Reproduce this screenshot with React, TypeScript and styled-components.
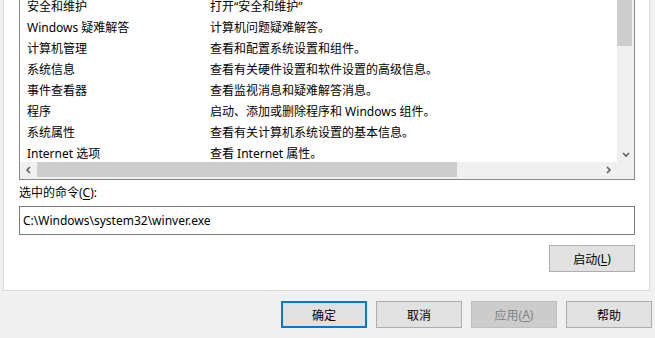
import React from "react";
import styled, { createGlobalStyle } from "styled-components";

const GlobalStyle = createGlobalStyle`
  html, body {
    margin: 0;
    padding: 0;
    background: #f0f0f0;
  }
  body {
    font-family: "Noto Sans", "Noto Sans CJK SC", sans-serif;
    font-size: 12px;
    color: #000;
  }
`;

type Tool = { name: string; desc: string };

const tools: Tool[] = [
  { name: "安全和维护", desc: "打开“安全和维护”" },
  { name: "Windows 疑难解答", desc: "计算机问题疑难解答。" },
  { name: "计算机管理", desc: "查看和配置系统设置和组件。" },
  { name: "系统信息", desc: "查看有关硬件设置和软件设置的高级信息。" },
  { name: "事件查看器", desc: "查看监视消息和疑难解答消息。" },
  { name: "程序", desc: "启动、添加或删除程序和 Windows 组件。" },
  { name: "系统属性", desc: "查看有关计算机系统设置的基本信息。" },
  { name: "Internet 选项", desc: "查看 Internet 属性。" },
];

const Window = styled.div`
  width: 655px;
  height: 338px;
  background: #f0f0f0;
  overflow: hidden;
  display: flex;
  flex-direction: column;
  font-family: "Noto Sans", "Noto Sans CJK SC", sans-serif;
  font-size: 12px;
`;

const TabPage = styled.div`
  margin-left: 3px;
  width: 647px;
  box-sizing: border-box;
  background: #fff;
  border: 1px solid #d9d9d9;
  border-top: none;
  padding: 0 14px 18px 15px;
  display: flex;
  flex-direction: column;
`;

const ListBox = styled.div`
  height: 180px;
  box-sizing: border-box;
  border: 1px solid #828790;
  border-top: none;
  display: grid;
  grid-template-columns: minmax(0, 1fr) 17px;
  grid-template-rows: minmax(0, 1fr) 17px;
  overflow: hidden;
`;

const Rows = styled.div`
  overflow: hidden;
  background: #fff;
`;

const RowsInner = styled.div`
  margin-top: -4px;
`;

const Row = styled.div`
  height: 21px;
  display: grid;
  grid-template-columns: 183px 1fr;
  align-items: center;
  padding-left: 7px;
  white-space: nowrap;
  line-height: 21px;
`;

const VScroll = styled.div`
  background: #f0f0f0;
  display: flex;
  flex-direction: column;
  justify-content: space-between;
  align-items: flex-start;
`;

const VThumb = styled.div`
  width: 15px;
  height: 46px;
  flex: none;
  background: #cdcdcd;
`;

const HScroll = styled.div`
  background: #f0f0f0;
  display: flex;
  align-items: flex-start;
  height: 17px;
`;

const HThumb = styled.div`
  flex: none;
  width: 420px;
  height: 15px;
  background: #cdcdcd;
`;

const Corner = styled.div`
  background: #f0f0f0;
`;

const Arrow = styled.svg`
  display: block;
  flex: none;
`;

const ArrowSlot = styled.div<{ $push?: boolean }>`
  flex: none;
  width: 17px;
  height: 15px;
  display: flex;
  align-items: center;
  justify-content: center;
  margin-left: ${(p) => (p.$push ? "auto" : "0")};
`;

const Label = styled.div`
  margin-top: 5px;
  line-height: 16px;
  height: 16px;
`;

const Key = styled.span`
  text-decoration: underline;
  text-underline-offset: 2px;
`;

const TextBox = styled.div`
  margin-top: 5px;
  height: 29px;
  box-sizing: border-box;
  border: 1px solid #7a7a7a;
  padding: 0 3px;
  display: flex;
  align-items: center;
  font-size: 12px;
`;

const RunRow = styled.div`
  margin-top: 10px;
  display: flex;
  justify-content: flex-end;
`;

const Button = styled.div<{ $default?: boolean; $disabled?: boolean }>`
  width: 86px;
  height: 27px;
  box-sizing: border-box;
  display: flex;
  align-items: center;
  justify-content: center;
  background: ${(p) => (p.$disabled ? "#cccccc" : "#e1e1e1")};
  border: ${(p) =>
    p.$default
      ? "2px solid #0078d7"
      : p.$disabled
      ? "1px solid #bfbfbf"
      : "1px solid #adadad"};
  color: ${(p) => (p.$disabled ? "#838383" : "#000")};
  font-size: 12px;
`;

const Footer = styled.div`
  margin-top: 10px;
  padding-right: 3px;
  display: flex;
  justify-content: flex-end;
  gap: 9px;
`;

const Chevron = ({ dir }: { dir: "down" | "left" | "right" }) => {
  const paths: Record<string, string> = {
    down: "M1 2 L4 5 L7 2",
    left: "M5 1 L2 4 L5 7",
    right: "M2 1 L5 4 L2 7",
  };
  const vertical = dir === "down";
  return (
    <Arrow
      width={vertical ? 8 : 7}
      height={vertical ? 7 : 8}
      viewBox={vertical ? "0 0 8 7" : "0 0 7 8"}
    >
      <path d={paths[dir]} fill="none" stroke="#606060" strokeWidth="1.6" />
    </Arrow>
  );
};

export default function App() {
  return (
    <Window>
      <GlobalStyle />
      <TabPage>
        <ListBox>
          <Rows>
            <RowsInner>
              {tools.map((t) => (
                <Row key={t.name}>
                  <span>{t.name}</span>
                  <span>{t.desc}</span>
                </Row>
              ))}
            </RowsInner>
          </Rows>
          <VScroll>
            <VThumb />
            <ArrowSlot>
              <Chevron dir="down" />
            </ArrowSlot>
          </VScroll>
          <HScroll>
            <ArrowSlot>
              <Chevron dir="left" />
            </ArrowSlot>
            <HThumb />
            <ArrowSlot $push>
              <Chevron dir="right" />
            </ArrowSlot>
          </HScroll>
          <Corner />
        </ListBox>
        <Label>
          选中的命令(<Key>C</Key>):
        </Label>
        <TextBox>C:\Windows\system32\winver.exe</TextBox>
        <RunRow>
          <Button>
            启动(<Key>L</Key>)
          </Button>
        </RunRow>
      </TabPage>
      <Footer>
        <Button $default>确定</Button>
        <Button>取消</Button>
        <Button $disabled>
          应用(<Key>A</Key>)
        </Button>
        <Button>帮助</Button>
      </Footer>
    </Window>
  );
}
